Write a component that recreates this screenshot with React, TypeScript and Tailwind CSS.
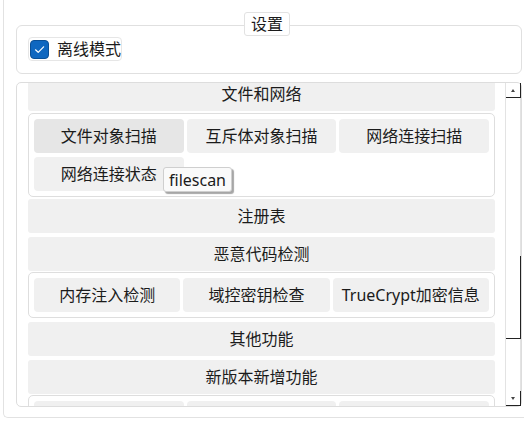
import React from 'react';

const FONT = "font-['Noto_Sans','Noto_Sans_CJK_SC',sans-serif]";

const SectionHeader = ({ title, className = '' }: { title: string; className?: string }) => (
  <div className={`h-[34px] shrink-0 rounded-[3px] bg-[#f0f0f0] flex items-center justify-center text-[16px] text-[#1b1b1b] ${className}`}>
    {title}
  </div>
);

const ActionButton = ({ label, hover = false }: { label: string; hover?: boolean }) => (
  <div className={`h-[34px] rounded-[4px] flex items-center justify-center text-[16px] text-[#1b1b1b] whitespace-nowrap ${hover ? 'bg-[#e6e6e6]' : 'bg-[#f0f0f0]'}`}>
    {label}
  </div>
);

const ButtonGroup = ({ children, cols, className = '' }: { children: React.ReactNode; cols: string; className?: string }) => (
  <div className={`shrink-0 rounded-[5px] border border-[#dedede] bg-white p-[5px] ${className}`}>
    <div className={`grid ${cols} gap-x-[3px] gap-y-[4px]`}>{children}</div>
  </div>
);

const Scrollbar = () => (
  <div className="w-[16px] shrink-0 flex flex-col border-l border-r border-[#e3e3e3]">
    <div className="h-[15px] w-[15px] border-r border-b border-[#222] flex items-center justify-center">
      <div className="w-0 h-0 border-l-[2px] border-r-[2px] border-b-[3px] border-l-transparent border-r-transparent border-b-[#444]" />
    </div>
    <div className="flex-1 flex flex-col">
      <div className="h-[158px]" />
      <div className="h-[83px] w-[15px] border-r border-b border-[#222]" />
    </div>
    <div className="h-[15px] w-[15px] border-r border-b border-[#222] flex items-center justify-center">
      <div className="w-0 h-0 border-l-[2px] border-r-[2px] border-t-[3px] border-l-transparent border-r-transparent border-t-[#444]" />
    </div>
  </div>
);

export default function App() {
  return (
    <div className={`relative w-[529px] h-[422px] bg-white overflow-hidden ${FONT}`}>
      <div className="ml-[3px] w-[521px] h-[418px] border-l border-b border-[#e2e2e2] rounded-bl-[5px] pt-[25px] pl-[12px]">
        {/* 设置 group */}
        <div className="relative w-[506px] h-[49px] rounded-[6px] border border-[#e0e0e0] pt-[11px] pl-[11px]">
          <div className="absolute left-[227px] top-[-14px] h-[24px] px-[6px] rounded-[3px] border border-[#e2e2e2] bg-white flex items-center text-[16px] text-[#1b1b1b] leading-none">
            设置
          </div>
          <div className="inline-flex items-center h-[24px] w-[94px] rounded-[4px] border border-[#e6e6e6] pl-[1px] gap-[8px]">
            <div className="w-[19px] h-[19px] rounded-[4px] bg-[#0f67c0] border border-[#0a4f96] flex items-center justify-center">
              <svg width="13" height="13" viewBox="0 0 13 13" fill="none">
                <path d="M2.5 6.8 L5.2 9.3 L10.6 3.8" stroke="white" strokeWidth="1.2" strokeLinecap="round" strokeLinejoin="round" />
              </svg>
            </div>
            <span className="text-[16px] text-[#1b1b1b] leading-none">离线模式</span>
          </div>
        </div>

        {/* scroll area */}
        <div className="mt-[8px] w-[506px] h-[325px] rounded-[5px] border border-[#dddddd] flex">
          <div className="flex-1 overflow-hidden pl-[11px] pr-[10px]">
            <div className="-mt-[6px] flex flex-col">
              <SectionHeader title="文件和网络" />
              <ButtonGroup cols="grid-cols-3" className="mt-[2px]">
                <ActionButton label="文件对象扫描" hover />
                <ActionButton label="互斥体对象扫描" />
                <ActionButton label="网络连接扫描" />
                <ActionButton label="网络连接状态" />
              </ButtonGroup>
              <SectionHeader title="注册表" className="mt-[2px]" />
              <SectionHeader title="恶意代码检测" className="mt-[4px]" />
              <ButtonGroup cols="grid-cols-[146fr_146fr_156fr]" className="mt-[1px]">
                <ActionButton label="内存注入检测" />
                <ActionButton label="域控密钥检查" />
                <ActionButton label="TrueCrypt加密信息" />
              </ButtonGroup>
              <SectionHeader title="其他功能" className="mt-[4px]" />
              <SectionHeader title="新版本新增功能" className="mt-[4px]" />
              <ButtonGroup cols="grid-cols-3" className="mt-[1px]">
                <ActionButton label="" />
                <ActionButton label="" />
                <ActionButton label="" />
              </ButtonGroup>
            </div>
          </div>
          <Scrollbar />
        </div>
      </div>

      {/* tooltip */}
      <div className="absolute left-[163px] top-[167px] h-[25px] px-[5px] rounded-[3px] border border-[#cfcfcf] bg-[#fafafa] shadow-[2px_2px_1px_rgba(0,0,0,0.35)] flex items-center text-[16px] text-[#1b1b1b] leading-none">
        filescan
      </div>
    </div>
  );
}
